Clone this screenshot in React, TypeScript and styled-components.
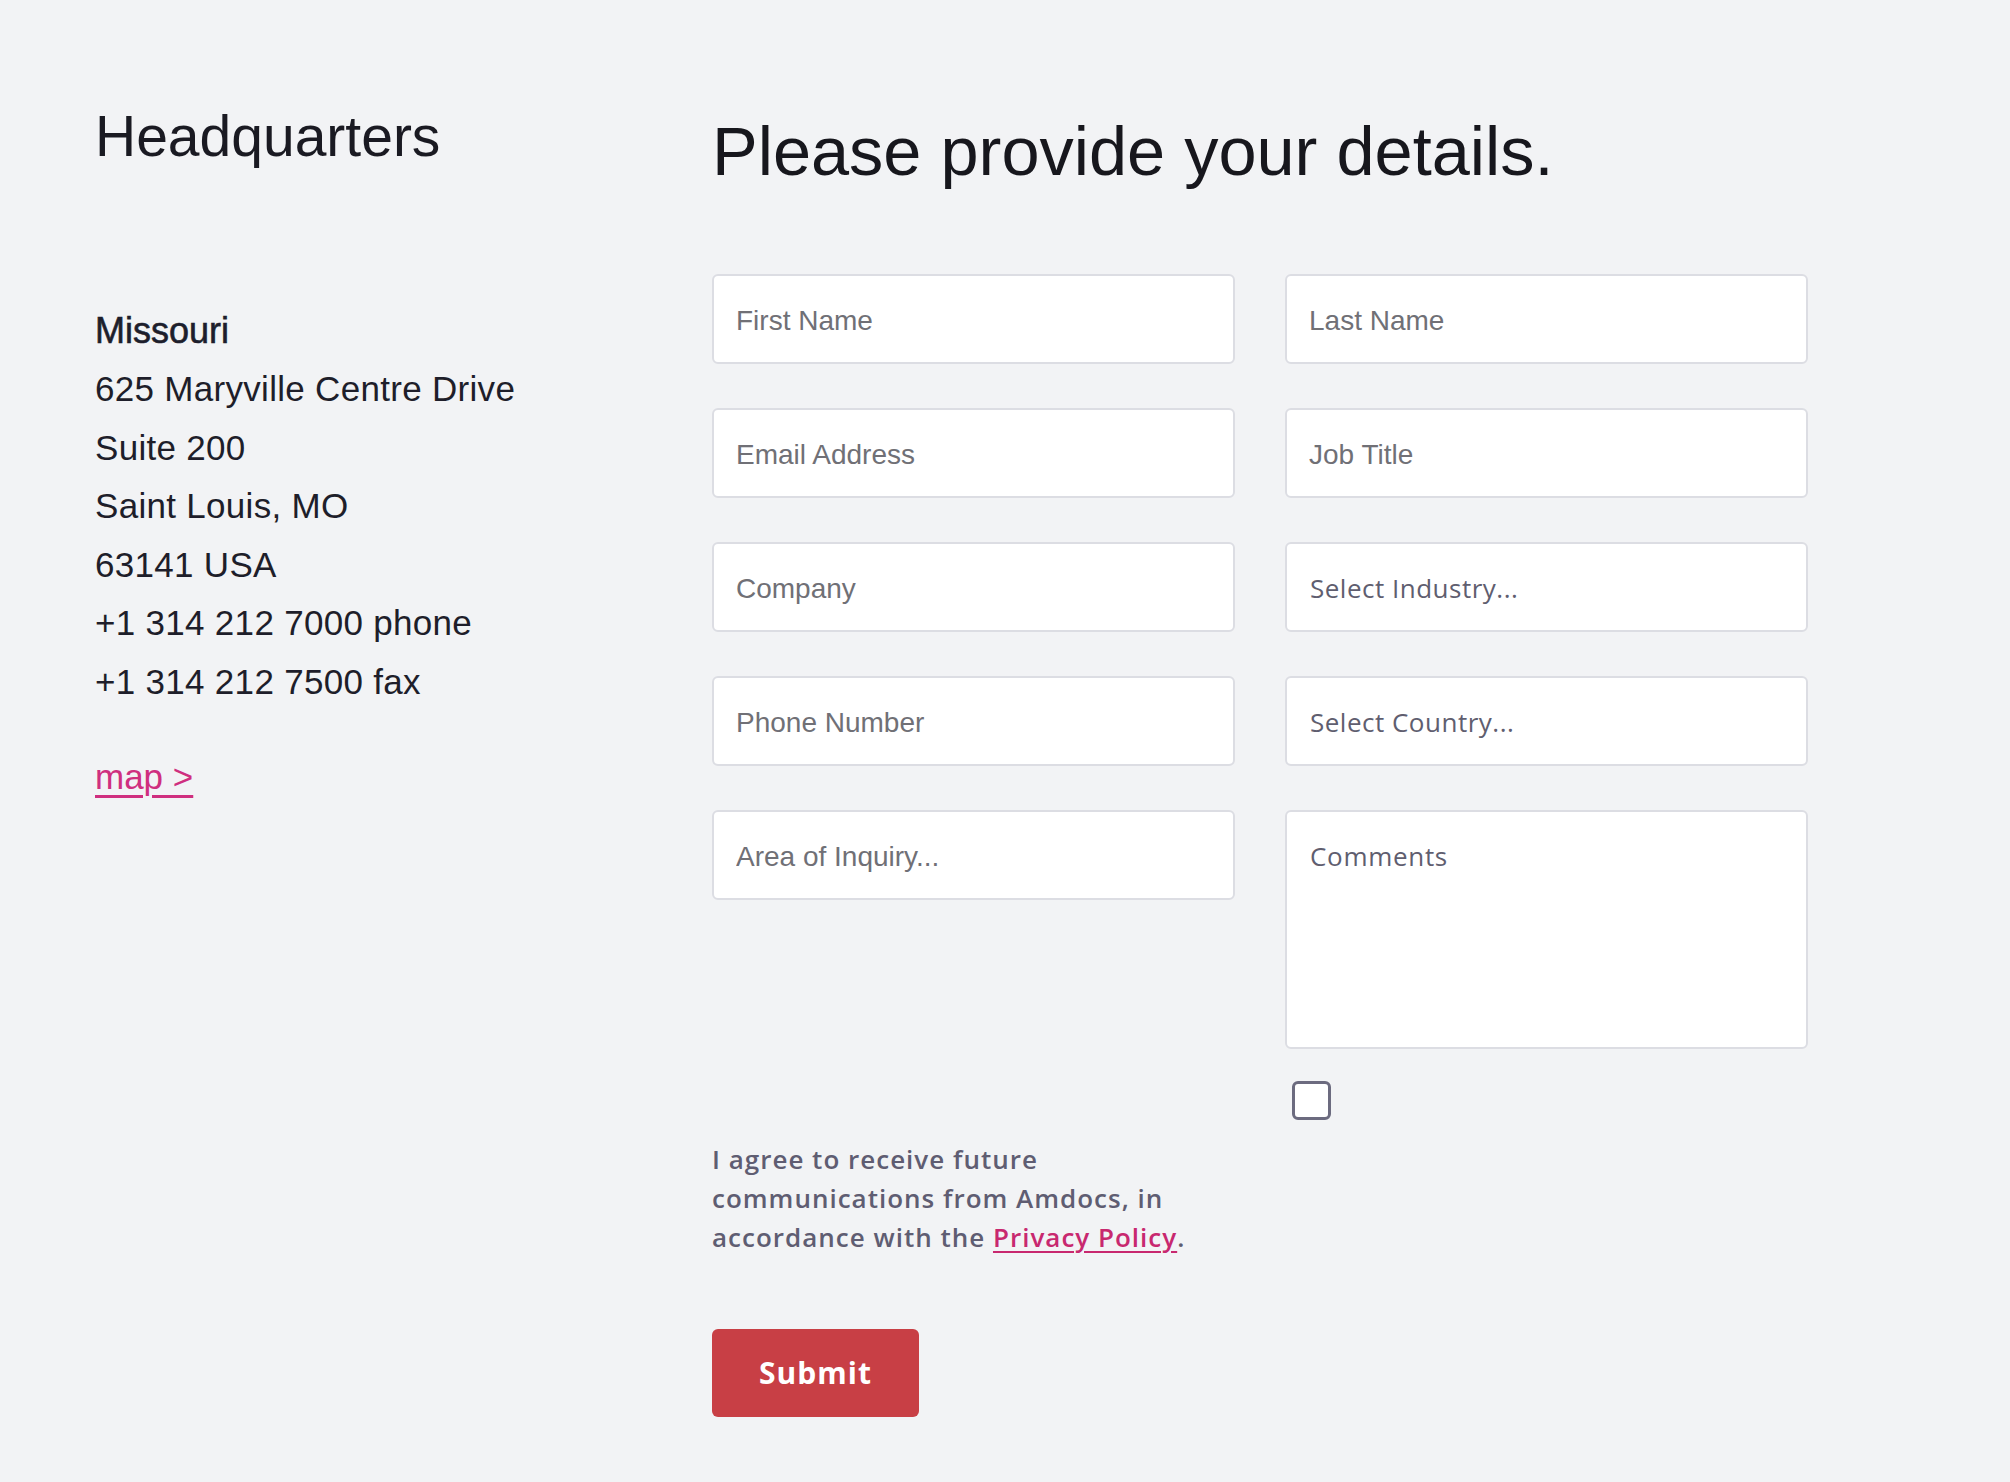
import React from "react";
import styled, { createGlobalStyle } from "styled-components";

const GlobalStyle = createGlobalStyle`
  html, body {
    margin: 0;
    padding: 0;
    background: #f2f3f5;
  }
  body {
    font-family: "Liberation Sans", Arial, sans-serif;
    color: #1e1e28;
  }
  * { box-sizing: border-box; }
`;

const Page = styled.div`
  display: grid;
  grid-template-columns: 617px 1096px;
  padding: 108px 0 0 95px;
  min-height: 1482px;
`;

const Aside = styled.aside`
  display: flex;
  flex-direction: column;
  align-items: flex-start;
`;

const SideTitle = styled.h2`
  margin: 0;
  font-family: "Liberation Sans", Arial, sans-serif;
  font-weight: 400;
  font-size: 57px;
  line-height: 1;
  color: #1a1a22;
`;

const Address = styled.address`
  margin-top: 137px;
  font-style: normal;
  display: flex;
  flex-direction: column;
`;

const Region = styled.div`
  font-size: 36px;
  line-height: 58px;
  font-weight: 400;
  color: #1d1e2c;
  -webkit-text-stroke: 0.6px #1d1e2c;
`;

const Line = styled.div`
  font-size: 35px;
  line-height: 58.6px;
  letter-spacing: 0.3px;
  color: #1e1e2a;
`;

const MapLink = styled.a`
  margin-top: 36px;
  font-size: 35px;
  line-height: 58px;
  color: #cf2f7f;
  text-decoration: underline;
  text-decoration-thickness: 3px;
  text-underline-offset: 6px;
  cursor: pointer;
`;

const Main = styled.main`
  padding-top: 10px;
`;

const Title = styled.h1`
  margin: 0;
  font-family: "Liberation Sans", Arial, sans-serif;
  font-weight: 400;
  font-size: 68.5px;
  line-height: 1;
  color: #17171d;
`;

const FormGrid = styled.form`
  margin-top: 87px;
  display: grid;
  grid-template-columns: 523px 523px;
  column-gap: 50px;
  row-gap: 44px;
  align-items: start;
`;

const fieldBase = `
  width: 100%;
  background: #ffffff;
  border: 2px solid #dcdde3;
  border-radius: 6px;
  outline: none;
`;

const TextField = styled.input`
  ${fieldBase}
  height: 90px;
  padding: 5px 22px 0;
  font-family: "Liberation Sans", Arial, sans-serif;
  font-size: 28px;
  color: #6e6e73;
  &::placeholder {
    color: #707076;
    opacity: 1;
  }
`;

const SelectField = styled.select`
  ${fieldBase}
  height: 90px;
  padding: 3px 23px 0;
  appearance: none;
  -webkit-appearance: none;
  font-family: "Open Sans", sans-serif;
  font-size: 26px;
  letter-spacing: 0.5px;
  color: #5f5e6f;
`;

const Comments = styled.textarea`
  ${fieldBase}
  height: 239px;
  padding: 24px 23px;
  resize: none;
  font-family: "Open Sans", sans-serif;
  font-size: 26px;
  line-height: 40px;
  letter-spacing: 0.7px;
  color: #5f5e6f;
  &::placeholder {
    color: #5f5e6f;
    opacity: 1;
  }
`;

const CheckRow = styled.div`
  margin-top: 32px;
  display: grid;
  grid-template-columns: 523px 523px;
  column-gap: 50px;
`;

const CheckBox = styled.input`
  grid-column: 2;
  margin: 0 0 0 7px;
  width: 39px;
  height: 39px;
  appearance: none;
  -webkit-appearance: none;
  background: #ffffff;
  border: 3px solid #6c6b7f;
  border-radius: 6px;
`;

const Consent = styled.p`
  margin: 20px 0 0;
  max-width: 500px;
  font-family: "Open Sans", sans-serif;
  font-weight: 600;
  font-size: 26px;
  line-height: 39px;
  letter-spacing: 1px;
  color: #5f5d72;
`;

const PolicyLink = styled.a`
  color: #c8286f;
  text-decoration: underline;
  text-decoration-thickness: 2px;
  text-underline-offset: 4px;
  cursor: pointer;
`;

const SubmitButton = styled.button`
  margin-top: 72px;
  width: 207px;
  height: 88px;
  border: none;
  border-radius: 6px;
  background: #c83f45;
  color: #ffffff;
  font-family: "Open Sans", sans-serif;
  font-weight: 700;
  font-size: 30px;
  letter-spacing: 1px;
  cursor: pointer;
`;

const lines = [
  "625 Maryville Centre Drive",
  "Suite 200",
  "Saint Louis, MO",
  "63141 USA",
  "+1 314 212 7000 phone",
  "+1 314 212 7500 fax",
];

export default function App() {
  return (
    <>
      <GlobalStyle />
      <Page>
        <Aside>
          <SideTitle>Headquarters</SideTitle>
          <Address>
            <Region>Missouri</Region>
            {lines.map((l) => (
              <Line key={l}>{l}</Line>
            ))}
          </Address>
          <MapLink>map &gt;</MapLink>
        </Aside>
        <Main>
          <Title>Please provide your details.</Title>
          <FormGrid onSubmit={(e) => e.preventDefault()}>
            <TextField placeholder="First Name" />
            <TextField placeholder="Last Name" />
            <TextField placeholder="Email Address" />
            <TextField placeholder="Job Title" />
            <TextField placeholder="Company" />
            <SelectField defaultValue="">
              <option value="">Select Industry...</option>
            </SelectField>
            <TextField placeholder="Phone Number" />
            <SelectField defaultValue="">
              <option value="">Select Country...</option>
            </SelectField>
            <TextField placeholder="Area of Inquiry..." />
            <Comments placeholder="Comments" />
          </FormGrid>
          <CheckRow>
            <CheckBox type="checkbox" aria-label="I agree" />
          </CheckRow>
          <Consent>
            I agree to receive future communications from Amdocs, in accordance with the{" "}
            <PolicyLink>Privacy Policy</PolicyLink>.
          </Consent>
          <SubmitButton type="button">Submit</SubmitButton>
        </Main>
      </Page>
    </>
  );
}
